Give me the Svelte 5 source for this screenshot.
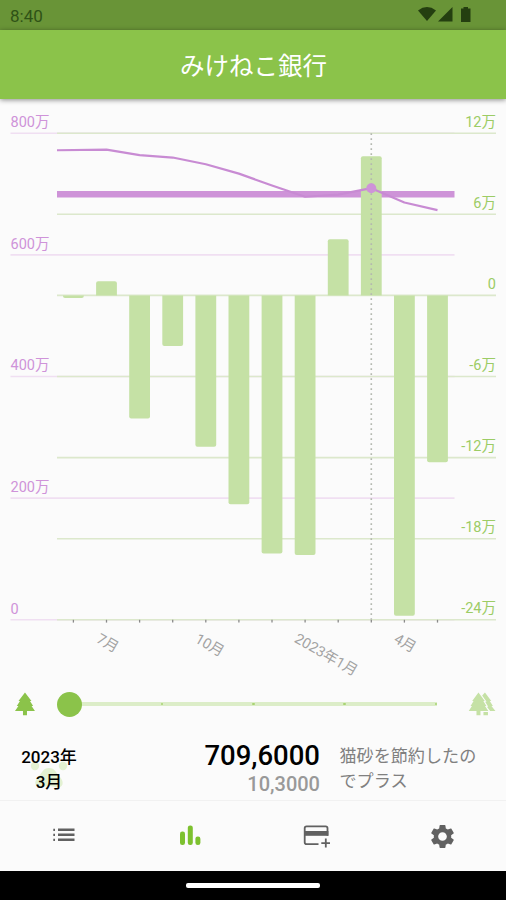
<script>
  const left = 57;
  const right = 454.5;
  const top = 34.2;
  const bottom = 520.8;

  const balanceTicks = [800, 600, 400, 200, 0];
  const profitTicks = [12, 6, 0, -6, -12, -18, -24];

  const profits = [-0.2, 1.05, -9.1, -3.75, -11.2, -15.45, -19.1, -19.2, 4.15, 10.3, -23.7, -12.35];
  const balances = [772, 773, 764, 760, 749, 733.5, 714, 695.5, 699, 709.6, 686, 673.5];
  const average = 699.6;
  const selected = 9;

  const months = [
    { label: '7月', x: 107.5, y: 544.5 },
    { label: '10月', x: 209.5, y: 546.5 },
    { label: '2023年1月', x: 326, y: 556 },
    { label: '4月', x: 405, y: 544.5 }
  ];

  const xOf = (i) => 73.4 + i * 33.1;
  const yBalance = (v) => bottom - (v / 800) * (bottom - top);
  const yProfit = (v) => top + ((12 - v) / 36) * (bottom - top);
  const zero = yProfit(0);

  const line = balances
    .map((v, i) => `${i === 0 ? left : xOf(i)},${yBalance(v)}`)
    .join(' ');

  // only the outer end of a bar is rounded
  function barPath(v, i) {
    const x = xOf(i) - 10.4;
    const end = yProfit(v);
    const r = Math.min(2, Math.abs(end - zero)) * (v < 0 ? -1 : 1);
    const a = Math.abs(r);
    return `M${x} ${zero}V${end + r}Q${x} ${end} ${x + a} ${end}H${x + 20.8 - a}Q${x + 20.8} ${end} ${x + 20.8} ${end + r}V${zero}Z`;
  }
</script>

<div class="app">
  <div class="status">
    <span>8:40</span>
    <svg width="56" height="18" viewBox="0 0 56 18">
      <path d="M0 4.4Q9 -2.2 18 4.4L9 15Z" />
      <path d="M20 15.5L34.5 1V15.5Z" />
      <path d="M43 2.5H45.5V1H50V2.5H52.5V16H43Z" />
    </svg>
  </div>

  <header>みけねこ銀行</header>

  <svg class="chart" viewBox="0 0 506 586">
    {#each balanceTicks as t}
      <line class="grid-balance" x1="10.5" x2={right} y1={yBalance(t)} y2={yBalance(t)} />
      <text class="label balance" x="10.5" y={yBalance(t) - 6.1}>{t}{t ? '万' : ''}</text>
    {/each}
    {#each profitTicks as t}
      <line class="grid-profit" x1={left} x2="496" y1={yProfit(t)} y2={yProfit(t)} />
      <text class="label profit" x="496" y={yProfit(t) - 6.6}>{t}{t ? '万' : ''}</text>
    {/each}

    <line class="average" x1={left} x2={right} y1={yBalance(average)} y2={yBalance(average)} />

    {#each profits as v, i}
      <path class="bar" d={barPath(v, i)} />
      <line class="tick" x1={xOf(i)} x2={xOf(i)} y1={bottom} y2={bottom + 2.8} />
    {/each}

    <line class="cursor" x1={xOf(selected)} x2={xOf(selected)} y1={top} y2={bottom} />
    <polyline class="line" points={line} />
    <circle class="dot" cx={xOf(selected)} cy={yBalance(balances[selected])} r="5" />

    {#each months as m}
      <text class="label month" transform="translate({m.x} {m.y}) rotate(30)">{m.label}</text>
    {/each}
  </svg>

  <div class="slider">
    <svg width="22" height="24" viewBox="0 0 22 24">
      <path d="M11 .5L17.5 9H16L19.2 14H17.6L21 19H13V23.2H9V19H1L4.4 14H2.8L6 9H4.5Z" />
    </svg>
    <div class="track">
      <span class="thumb"></span>
      <div class="steps"><i></i><i></i><i></i><i></i></div>
    </div>
    <svg class="pale" width="28" height="24" viewBox="0 0 28 24">
      <path d="M10.5 .5L16.8 9H15.4L18.4 14H17L20.4 19H12.5V23.2H8.5V19H.7L4 14H2.6L5.6 9H4.2Z" />
      <path d="M14.2 3.4L17 .5L23.3 9H21.8L25 14H23.5L27.5 19H22.2L19 14.8H20.3L17.2 9.7H18.6ZM15.5 20H20V23.2H15.5Z" />
    </svg>
  </div>

  <section class="summary">
    <div class="date">
      <svg class="paw" width="42" height="34" viewBox="0 0 42 34">
        <circle cx="7" cy="8" r="4.2" />
        <circle cx="35" cy="8" r="4.2" />
        <path d="M21 10C27 10 28 15 32 19C38 26 33 31 27 29Q21 27 15 29C9 31 4 26 10 19C14 15 15 10 21 10Z" />
      </svg>
      <span>2023年<br />3月</span>
    </div>
    <div class="amount">
      <strong>709,6000</strong>
      <span>10,3000</span>
    </div>
    <p>猫砂を節約したのでプラス</p>
  </section>

  <nav>
    <svg width="24" height="24" viewBox="0 0 24 24">
      <path d="M2.3 4.8H4V7H2.3ZM2.3 9.8H4V12H2.3ZM2.3 14.8H4V17H2.3ZM7 4.6H23.5V7H7ZM7 9.6H23.5V12H7ZM7 14.6H23.5V17H7Z" />
    </svg>
    <svg class="active" width="24" height="24" viewBox="0 0 24 24">
      <rect x="2" y="7.5" width="5" height="13.5" rx="2.3" />
      <rect x="9.8" y="1.5" width="5" height="19.5" rx="2.3" />
      <rect x="17.4" y="12.5" width="5" height="8.5" rx="2.3" />
    </svg>
    <svg width="28" height="24" viewBox="0 0 28 24">
      <path class="stroke" d="M16.5 20.2H4.6Q2.7 20.2 2.7 18.3V4.2Q2.7 2.3 4.6 2.3H23.6Q25.5 2.3 25.5 4.2V11.8" />
      <path d="M2 7H26.4V11.8H2Z" />
      <path class="stroke" d="M23.8 14.6V23.6M19.3 19.1H28" />
    </svg>
    <svg width="29" height="29" viewBox="0 0 24 24">
      <path d="M19.14 12.94c.04-.3.06-.61.06-.94 0-.32-.02-.64-.07-.94l2.03-1.58c.18-.14.23-.41.12-.61l-1.92-3.32c-.12-.22-.37-.29-.59-.22l-2.39.96c-.5-.38-1.03-.7-1.62-.94l-.36-2.54c-.04-.24-.24-.41-.48-.41h-3.84c-.24 0-.43.17-.47.41l-.36 2.54c-.59.24-1.13.57-1.62.94l-2.39-.96c-.22-.08-.47 0-.59.22L2.74 8.87c-.12.21-.08.47.12.61l2.03 1.58c-.05.3-.09.63-.09.94s.02.64.07.94l-2.03 1.58c-.18.14-.23.41-.12.61l1.92 3.32c.12.22.37.29.59.22l2.39-.96c.5.38 1.03.7 1.62.94l.36 2.54c.05.24.24.41.48.41h3.84c.24 0 .44-.17.47-.41l.36-2.54c.59-.24 1.13-.56 1.62-.94l2.39.96c.22.08.47 0 .59-.22l1.92-3.32c.12-.22.07-.47-.12-.61l-2.01-1.58zM12 15.6c-1.98 0-3.6-1.62-3.6-3.6s1.62-3.6 3.6-3.6 3.6 1.62 3.6 3.6-1.62 3.6-3.6 3.6z" />
    </svg>
  </nav>

  <div class="home"><span></span></div>
</div>

<style>
  :global(body) {
    margin: 0;
  }

  .app {
    display: flex;
    flex-direction: column;
    width: 506px;
    height: 900px;
    overflow: hidden;
    background: #fbfbfb;
    font-family: Roboto, 'Noto Sans CJK JP', sans-serif;
  }

  .status {
    display: flex;
    justify-content: space-between;
    align-items: center;
    box-sizing: border-box;
    flex: none;
    height: 30px;
    padding: 2px 32px 0 10px;
    background: #699437;
    color: #2f5216;
    font-size: 17px;
  }

  .status svg {
    fill: #243f10;
    margin-top: -2px;
  }

  header {
    flex: none;
    height: 69px;
    background: #8bc34a;
    box-shadow: 0 1px 5px rgba(0, 0, 0, 0.45);
    color: #fff;
    font-size: 24.5px;
    line-height: 73px;
    text-align: center;
    text-indent: 1px;
    z-index: 1;
  }

  .chart {
    flex: none;
    width: 506px;
    height: 586px;
  }

  .grid-balance {
    stroke: #f0dff2;
    stroke-width: 1.6;
  }

  .grid-profit {
    stroke: #dce8cc;
    stroke-width: 1.6;
  }

  .label {
    font-size: 14.5px;
  }

  .balance {
    fill: #cf93d9;
  }

  .profit {
    fill: #9ccc65;
    text-anchor: end;
  }

  .month {
    fill: #a3a3a3;
    text-anchor: middle;
    dominant-baseline: central;
  }

  .average {
    stroke: #ce93d8;
    stroke-width: 6.4;
  }

  .bar {
    fill: #c5e1a5;
  }

  .tick {
    stroke: #8a8a8a;
    stroke-width: 1.3;
  }

  .cursor {
    stroke: #b4b8b0;
    stroke-width: 1.6;
    stroke-dasharray: 1.8 3.2;
  }

  .line {
    fill: none;
    stroke: #c88bd3;
    stroke-width: 2.2;
    stroke-linejoin: round;
  }

  .dot {
    fill: #ce93d8;
  }

  .slider {
    display: flex;
    align-items: center;
    flex: none;
    height: 38px;
    padding: 0 10px 0 14px;
    fill: #8bc34a;
  }

  .slider .pale {
    fill: #c5e1a5;
  }

  .track {
    display: flex;
    align-items: center;
    width: 381px;
    height: 4px;
    margin: 0 31px 0 21px;
    background: linear-gradient(#dcedc8, #dcedc8) 12px 0 / 369px 4px no-repeat;
  }

  .thumb {
    width: 25px;
    height: 25px;
    border-radius: 50%;
    background: #8bc34a;
  }

  .steps {
    display: flex;
    justify-content: space-between;
    flex: 1;
    margin-left: 79px;
  }

  .steps i {
    width: 2.5px;
    height: 2.5px;
    border-radius: 50%;
    background: #a9d373;
  }

  .summary {
    display: flex;
    box-sizing: border-box;
    flex: none;
    height: 78px;
    padding: 0 14px 0 14px;
    border-bottom: 1px solid #f1f1f1;
  }

  .date {
    display: grid;
    width: 70px;
    padding-top: 22px;
    font-size: 17px;
    font-weight: 500;
    line-height: 25px;
    text-align: center;
  }

  .date > * {
    grid-area: 1 / 1;
    justify-self: center;
  }

  .date span {
    z-index: 1;
  }

  .paw {
    fill: #e3f1d2;
    margin-top: 13px;
  }

  .amount {
    display: flex;
    flex-direction: column;
    width: 236px;
    padding-top: 17px;
    text-align: right;
  }

  .amount strong {
    font-size: 27.5px;
    font-weight: 500;
    line-height: 32px;
  }

  .amount span {
    color: #999;
    font-size: 20px;
    font-weight: 500;
    line-height: 25px;
  }

  .summary p {
    width: 143px;
    margin: 21px 0 0 19.5px;
    color: #808080;
    font-size: 17.1px;
    line-height: 25px;
  }

  nav {
    display: grid;
    grid-template-columns: repeat(4, 1fr);
    place-items: center;
    flex: none;
    height: 70px;
    fill: #616161;
  }

  nav .active {
    fill: #7dc12f;
  }

  .stroke {
    fill: none;
    stroke: #616161;
    stroke-width: 1.8;
  }

  .home {
    display: flex;
    justify-content: center;
    align-items: center;
    flex: 1;
    background: #000;
  }

  .home span {
    width: 134px;
    height: 5px;
    border-radius: 2px;
    background: #fff;
  }
</style>
